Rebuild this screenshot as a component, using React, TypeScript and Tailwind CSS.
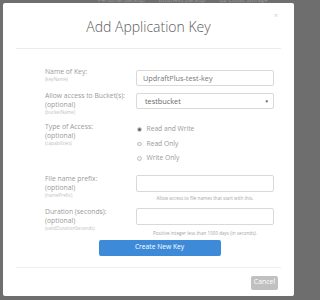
import React from 'react';

const font = { fontFamily: '"Open Sans", "Liberation Sans", sans-serif' };

function Label({ title, lines }: { title: string[]; lines: string }) {
  return (
    <div className="w-[91px] shrink-0">
      {title.map((t) => (
        <div key={t} className="text-[6.8px] leading-[9px] text-[#9a9a9a]">
          {t}
        </div>
      ))}
      <div className="text-[4.6px] leading-[7px] text-[#c2c2c2]">{lines}</div>
    </div>
  );
}

function Radio({ label, checked }: { label: string; checked?: boolean }) {
  return (
    <div className="flex h-[14.5px] items-center">
      <span className="ml-[1px] flex h-[4.5px] w-[4.5px] items-center justify-center rounded-full border-[0.5px] border-[#c4c4c4] bg-[#f2f2f2]">
        {checked && <span className="h-[2.5px] w-[2.5px] rounded-full bg-[#666]" />}
      </span>
      <span className="ml-[5px] text-[6.7px] text-[#9a9a9a]">{label}</span>
    </div>
  );
}

export default function App() {
  return (
    <div className="h-[300px] w-full overflow-hidden bg-[#6e6e6e]" style={font}>
      {/* page behind the overlay */}
      <div className="flex h-[3px] overflow-hidden text-[6px] leading-[6px] text-[#9a9a9a]">
        <div className="ml-[98px] -mt-[3px] flex gap-[14px]">
          <span>Personal Backup</span>
          <span>Business Backup</span>
          <span>B2 Cloud Storage</span>
        </div>
      </div>

      <div className="relative ml-[3px] h-[293px] w-[291px] rounded-[2px] bg-white">
        <span className="absolute right-[16px] top-[8px] text-[7px] leading-[10px] text-[#d0d0d0]">×</span>

        {/* header */}
        <div className="pt-[16px] text-center text-[14px] font-light leading-[16px] text-[#5a5a5a]">
          Add Application Key
        </div>
        <div className="mx-[13px] mt-[13px] h-px bg-[#ececec]" />

        {/* form */}
        <div className="ml-[42px] mt-[18px] w-[229px]">
          <div className="flex">
            <Label title={['Name of Key:']} lines="(keyName)" />
            <div className="mt-[3px] flex h-[16px] flex-1 items-center rounded-[2px] border border-[#d9d9d9] px-[6px] text-[7.3px] text-[#777]">
              UpdraftPlus-test-key
            </div>
          </div>

          <div className="mt-[5px] flex">
            <Label title={['Allow access to Bucket(s):', '(optional)']} lines="(bucketName)" />
            <div className="mt-[2px] flex h-[16px] flex-1 items-center justify-between rounded-[2px] border border-[#d9d9d9] pl-[8px] pr-[4px] text-[7.3px] text-[#666]">
              <span>testbucket</span>
              <span className="text-[4.5px] text-[#555]">▼</span>
            </div>
          </div>

          <div className="mt-[6px] flex">
            <Label title={['Type of Access:', '(optional)']} lines="(capabilities)" />
            <div className="flex-1">
              <Radio label="Read and Write" checked />
              <Radio label="Read Only" />
              <Radio label="Write Only" />
            </div>
          </div>

          <div className="mt-[8px] flex">
            <Label title={['File name prefix:', '(optional)']} lines="(namePrefix)" />
            <div className="flex-1">
              <div className="mt-[1px] h-[17px] rounded-[2px] border border-[#d9d9d9]" />
              <div className="mt-[3px] text-center text-[4.6px] leading-[6px] text-[#a5a5a5]">
                Allow access to file names that start with this.
              </div>
            </div>
          </div>

          <div className="mt-[6px] flex">
            <Label title={['Duration (seconds):', '(optional)']} lines="(validDurationSeconds)" />
            <div className="flex-1">
              <div className="mt-[1px] h-[17px] rounded-[2px] border border-[#d9d9d9]" />
              <div className="mt-[5px] text-center text-[4.6px] leading-[6px] text-[#a5a5a5]">
                Positive integer less than 1000 days (in seconds).
              </div>
            </div>
          </div>

          <div className="mt-[4px] flex justify-center">
            <button className="h-[16px] w-[122px] rounded-[2px] bg-[#3d8bd8] text-[6.7px] text-white">
              Create New Key
            </button>
          </div>
        </div>

        <div className="mx-[13px] mt-[11px] h-px bg-[#efefef]" />

        <div className="mr-[16px] mt-[8px] flex justify-end">
          <button className="h-[14px] w-[27px] rounded-[2px] bg-[#c0c0c0] text-[6.9px] text-white">
            Cancel
          </button>
        </div>
      </div>
    </div>
  );
}
